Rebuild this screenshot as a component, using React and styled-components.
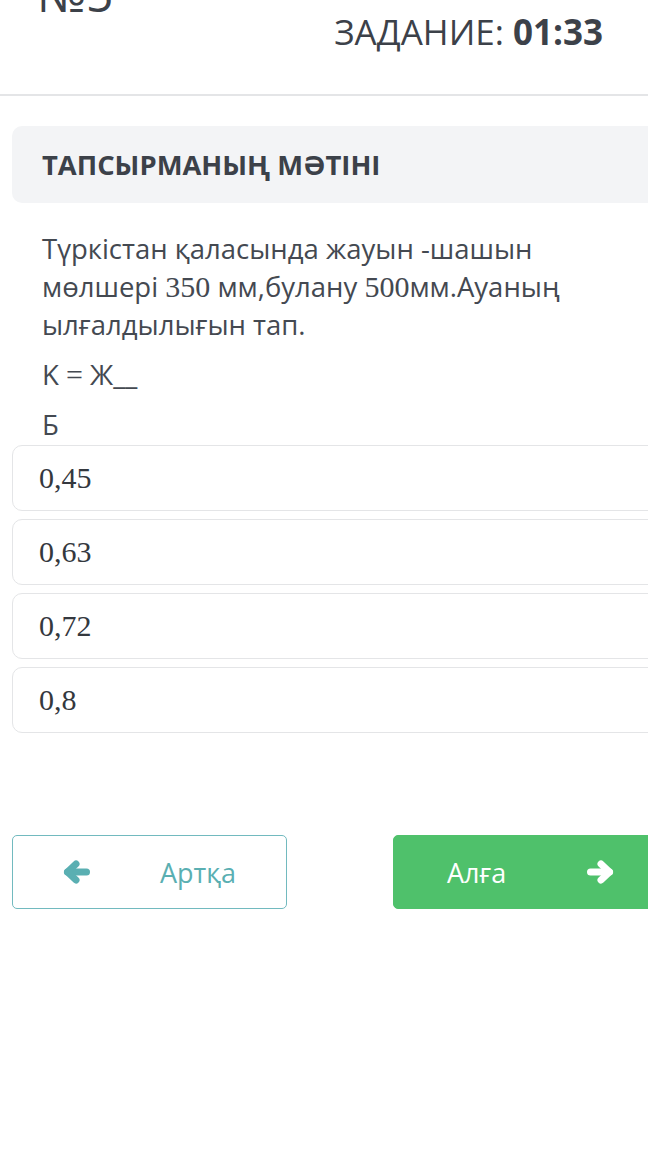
import React from "react";
import styled, { createGlobalStyle } from "styled-components";

const GlobalStyle = createGlobalStyle`
  html, body {
    margin: 0;
    padding: 0;
    background: #ffffff;
    overflow: hidden;
  }
  body {
    font-family: "Open Sans", "Noto Sans", sans-serif;
    color: #3c4149;
  }
`;

const Page = styled.div`
  width: 680px;
`;

const Header = styled.header`
  display: flex;
  align-items: flex-start;
  justify-content: space-between;
  padding: 0 77px 38px 37px;
  border-bottom: 2px solid #e4e5e7;
`;

const Number = styled.div`
  font-size: 48px;
  line-height: 1;
  margin-top: -30px;
  color: #3c4149;
`;

const Timer = styled.div`
  font-size: 35px;
  line-height: 48px;
  margin-top: -40px;
  color: #3c4149;

  b {
    font-weight: 700;
  }
`;

const Main = styled.main`
  padding: 30px 12px 0;
`;

const TitleCard = styled.div`
  height: 77px;
  display: flex;
  align-items: center;
  padding-left: 30px;
  background: #f3f4f6;
  border-radius: 10px;
  font-size: 27.4px;
  font-weight: 700;
  color: #3c4149;
`;

const Question = styled.div`
  margin-top: 27px;
  padding-left: 30px;
  width: 560px;
  font-size: 27.5px;
  line-height: 38px;
  color: #444951;
`;

const Line = styled.p`
  margin: 0 0 ${({ $gap }) => $gap}px;
`;

const MathNum = styled.span`
  font-family: "Liberation Serif", "DejaVu Serif", serif;
  font-size: 30px;
  line-height: 1;
`;

const Answers = styled.div`
  margin-top: 1px;
  display: flex;
  flex-direction: column;
  gap: 8px;
`;

const Answer = styled.div`
  height: 66px;
  box-sizing: border-box;
  display: flex;
  align-items: center;
  padding-left: 26px;
  border: 1px solid #e4e5e7;
  border-radius: 10px;
  font-family: "Liberation Serif", "DejaVu Serif", serif;
  font-size: 30px;
  color: #34383e;
`;

const Nav = styled.div`
  margin-top: 102px;
  display: flex;
  justify-content: space-between;
`;

const NavButton = styled.button`
  width: 275px;
  height: 74px;
  box-sizing: border-box;
  display: flex;
  align-items: center;
  justify-content: space-between;
  padding: 0 ${({ $primary }) => ($primary ? 53 : 50)}px;
  border-radius: 5px;
  border: 1px solid ${({ $primary }) => ($primary ? "#4fc16b" : "#72babf")};
  background: ${({ $primary }) => ($primary ? "#4fc16b" : "#ffffff")};
  color: ${({ $primary }) => ($primary ? "#ffffff" : "#5aafb2")};
  font-family: "Open Sans", sans-serif;
  font-size: 27px;
  cursor: pointer;
`;

function Arrow({ dir }) {
  return (
    <svg
      width="27"
      height="24"
      viewBox="0 0 27 24"
      fill="none"
      stroke="currentColor"
      strokeWidth="7"
      strokeLinecap="round"
      strokeLinejoin="round"
      style={{ transform: dir === "right" ? "scaleX(-1)" : undefined }}
    >
      <path d="M4.5 12H23.5" />
      <path d="M13 4L4.5 12L13 20" />
    </svg>
  );
}

const answers = ["0,45", "0,63", "0,72", "0,8"];

export default function App() {
  return (
    <Page>
      <GlobalStyle />
      <Header>
        <Number>№5</Number>
        <Timer>
          ВРЕМЯ НА
          <br />
          ЗАДАНИЕ: <b>01:33</b>
        </Timer>
      </Header>
      <Main>
        <TitleCard>ТАПСЫРМАНЫҢ МӘТІНІ</TitleCard>
        <Question>
          <Line $gap={12}>
            Түркістан қаласында жауын -шашын мөлшері <MathNum>350</MathNum> мм,булану{" "}
            <MathNum>500</MathNum>мм.Ауаның ылғалдылығын тап.
          </Line>
          <Line $gap={12}>
            K <MathNum>=</MathNum> Ж__
          </Line>
          <Line $gap={0}>Б</Line>
        </Question>
        <Answers>
          {answers.map((a) => (
            <Answer key={a}>{a}</Answer>
          ))}
        </Answers>
        <Nav>
          <NavButton>
            <Arrow dir="left" />
            Артқа
          </NavButton>
          <NavButton $primary>
            Алға
            <Arrow dir="right" />
          </NavButton>
        </Nav>
      </Main>
    </Page>
  );
}
